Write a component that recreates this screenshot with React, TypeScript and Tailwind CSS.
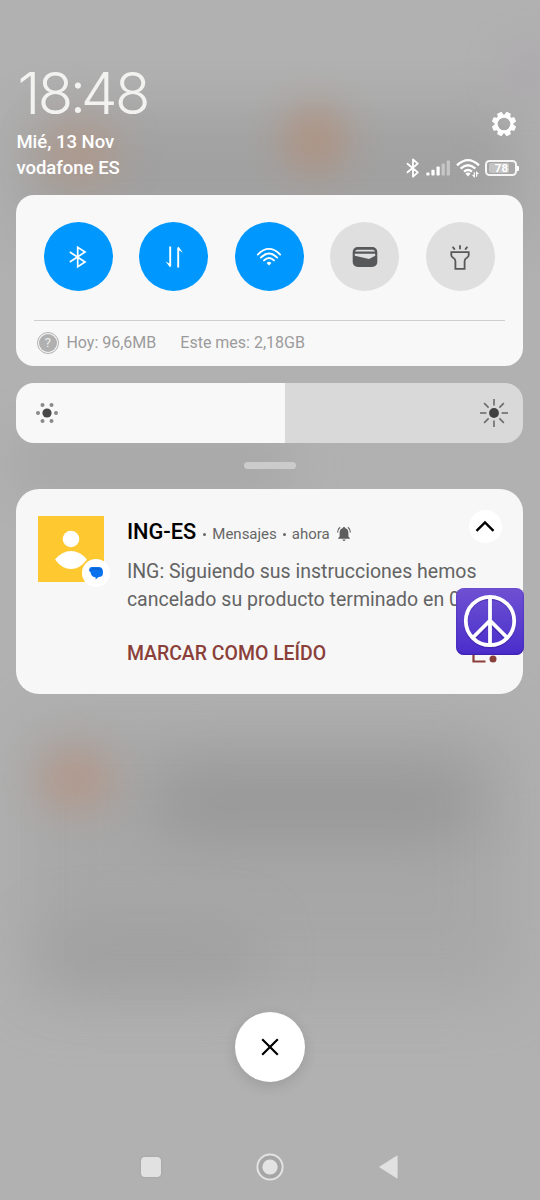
import type { ReactNode } from "react";

const digits = [
  { char: "1", className: "tracking-[-2.5px]" },
  { char: "8", className: "tracking-[-3.5px]" },
  { char: ":", className: "tracking-[-5px] -mt-[1.5px]" },
  { char: "4", className: "tracking-[-2.5px]" },
  { char: "8", className: "tracking-[-3px]" },
];

function Backdrop() {
  return (
    <div className="absolute inset-0 overflow-hidden bg-[#b1b1b1]">
      <div className="absolute left-[20px] top-[110px] w-[500px] h-[130px] bg-[#9a9a9a] opacity-70 blur-[30px]" />
      <div className="absolute left-[40px] top-[120px] w-[80px] h-[66px] rounded-full bg-[#b5937f] opacity-60 blur-[20px]" />
      <div className="absolute left-[282px] top-[106px] w-[66px] h-[68px] rounded-full bg-[#b38d76] opacity-70 blur-[19px]" />
      <div className="absolute left-[505px] top-[50px] w-[50px] h-[40px] rounded-full bg-[#a99ca8] opacity-50 blur-[20px]" />
      <div className="absolute left-[10px] top-[435px] w-[280px] h-[60px] bg-[#a2a2a2] opacity-60 blur-[24px]" />
      <div className="absolute left-[20px] top-[720px] w-[500px] h-[280px] bg-[#a5a5a5] opacity-80 blur-[34px]" />
      <div className="absolute left-[150px] top-[765px] w-[330px] h-[74px] rounded-full bg-[#929292] opacity-70 blur-[30px]" />
      <div className="absolute left-[40px] top-[925px] w-[220px] h-[60px] rounded-full bg-[#9a9a9a] opacity-60 blur-[28px]" />
      <div className="absolute left-[38px] top-[748px] w-[76px] h-[62px] rounded-full bg-[#b59382] opacity-75 blur-[20px]" />
    </div>
  );
}

function Clock() {
  return (
    <div className="flex h-[60px] pl-px font-[Inter,sans-serif] text-[58px] leading-[58px] font-light text-[#f2f2f0]">
      {digits.map((digit, index) => (
        <span key={index} className={digit.className}>
          {digit.char}
        </span>
      ))}
    </div>
  );
}

function GearIcon() {
  return (
    <svg width="26" height="26" viewBox="-13 -13 26 26" fill="#fff">
      {[0, 45, 90, 135, 180, 225, 270, 315].map((angle) => (
        <path key={angle} d="M-3.2 -8L-2.5 -11.6Q-2.3 -12.2 -1.7 -12.2H1.7Q2.3 -12.2 2.5 -11.6L3.2 -8Z" transform={`rotate(${angle + 22.5})`} />
      ))}
      <circle r="7.9" fill="none" stroke="#fff" strokeWidth="3.2" />
    </svg>
  );
}

function StatusIcons() {
  return (
    <div className="flex items-center h-[26px] text-white">
      <svg width="14" height="20" viewBox="0 0 14 20" fill="none" stroke="#fff" strokeWidth="1.8" strokeLinejoin="round" strokeLinecap="round">
        <path d="M1.5 5.7L11.8 14.4L7 18.7V1.3L11.8 5.6L1.5 14.3" />
      </svg>
      <svg className="ml-[6px]" width="25" height="18" viewBox="0 0 25 18" fill="#fff">
        <rect x="0.3" y="13.6" width="3.2" height="2.9" rx="0.8" />
        <rect x="5.4" y="10.8" width="3.2" height="5.7" rx="0.8" />
        <rect x="10.5" y="7.4" width="3.2" height="9.1" rx="0.8" />
        <rect x="15.6" y="4.4" width="3.2" height="12.1" rx="0.8" opacity="0.4" />
        <rect x="20.7" y="1.5" width="3.2" height="15" rx="0.8" opacity="0.4" />
      </svg>
      <svg className="ml-[5px]" width="25" height="20" viewBox="0 0 25 20" fill="none" stroke="#fff" strokeWidth="2.3">
        <path d="M1 7.3Q12 -3 23 7.3" />
        <path d="M4.6 10.6Q12 3.9 19.4 10.6" />
        <path d="M8 13.7Q12 10.3 16 13.7" />
        <path d="M9.4 15.6Q12 13.6 14.6 15.6L12 18.4Z" fill="#fff" stroke="none" />
        <path d="M18.3 14.2V18.6L16.6 17M20.6 18.8V14.4L22.4 16" strokeWidth="1.2" />
      </svg>
      <div className="ml-[4px] relative flex items-center justify-center w-[32px] h-[16px] rounded-[4.5px] border-2 border-white/90">
        <div className="absolute left-[1.5px] top-[1px] w-[20px] h-[10px] rounded-[2px] bg-white/35" />
        <span className="relative font-[Roboto,sans-serif] text-[11.5px] leading-[12px] font-bold">78</span>
      </div>
      <div className="w-[2px] h-[5px] rounded-r-[1px] bg-white" />
    </div>
  );
}

function Toggle({ active, children }: { active?: boolean; children: ReactNode }) {
  return (
    <button
      type="button"
      className={`flex items-center justify-center w-[69px] h-[69px] rounded-full ${active ? "bg-[#0098ff]" : "bg-[#dfdfdf]"}`}
    >
      {children}
    </button>
  );
}

function QuickSettings() {
  return (
    <section className="h-[171px] mt-[12.5px] px-[18px] rounded-[18px] bg-[#f8f8f8]">
      <div className="flex justify-between pt-[27.5px] pl-[9.5px] pr-[10.5px]">
        <Toggle active>
          <svg width="18" height="24" viewBox="0 0 18 24" fill="none" stroke="#fff" strokeWidth="1.7" strokeLinejoin="miter">
            <path d="M0.8 7L16 17L8.7 21.6V2.4L16 7L0.8 17" />
          </svg>
        </Toggle>
        <Toggle active>
          <svg width="18" height="24" viewBox="0 0 18 24" fill="none" stroke="#fff" strokeWidth="1.9">
            <path d="M5.2 1.5V21.4M13.2 22.4V2.5" />
            <path d="M0.6 16.4L5.2 19V22.6ZM17.8 7.4L13.2 5V1.2Z" fill="#fff" stroke="none" />
          </svg>
        </Toggle>
        <Toggle active>
          <svg width="26" height="20" viewBox="0 0 26 20" fill="none" stroke="#fff" strokeWidth="1.9" strokeLinecap="round">
            <path d="M1.8 7.6Q13 -3.8 24.2 7.6" />
            <path d="M4.8 10.6Q13 2.6 21.2 10.6" />
            <path d="M8 13.4Q13 8.8 18 13.4" />
            <path d="M10.6 16Q13 13.6 15.4 16L13 18.4Z" fill="#fff" stroke="none" />
          </svg>
        </Toggle>
        <Toggle>
          <svg width="26" height="22" viewBox="0 0 26 22">
            <rect x="0.7" y="1" width="24.6" height="20" rx="5" fill="#57585a" />
            <path d="M3 5.4Q3.6 3.8 5.4 3.8H20.6Q22.4 3.8 23 5.4Z" fill="#dfdfdf" />
            <path d="M2.8 7.8H23.2V9.8L18 12.6Q16.6 13.2 15 12.6L2.8 9.8Z" fill="#dfdfdf" />
          </svg>
        </Toggle>
        <Toggle>
          <svg width="20" height="26" viewBox="0 0 20 26" fill="none" stroke="#57585a" strokeWidth="1.8">
            <path d="M1.3 8.1H18.7V11Q18.7 12.6 17.2 13.5Q14.6 15 14.6 17V24.8H5.4V17Q5.4 15 2.8 13.5Q1.3 12.6 1.3 11Z" />
            <path d="M10 1.2V5.2M2.6 2.8L4.8 5.6M17.4 2.8L15.2 5.6" />
          </svg>
        </Toggle>
      </div>
      <div className="mt-[28.5px] h-px bg-[#cfcfcf]" />
      <div className="flex items-center mt-[8.5px] h-[28px] pl-[2.5px] text-[16px] text-[#9b9b9b]">
        <span className="flex items-center justify-center w-[22px] h-[22px] rounded-full border border-[#b0b0b0]">
          <span className="w-[18px] h-[18px] rounded-full bg-[#b0b0b0] text-[13px] leading-[18px] text-center text-[#ececec]">?</span>
        </span>
        <span className="ml-[7.5px]">Hoy: 96,6MB</span>
        <span className="ml-[24px]">Este mes: 2,18GB</span>
      </div>
    </section>
  );
}

function Brightness() {
  return (
    <section className="flex items-center justify-between mt-[17px] h-[60px] pl-[18.5px] pr-[14.5px] rounded-[18px] bg-[linear-gradient(90deg,#f8f8f8_269px,#d9d9d9_269px)]">
      <svg width="24" height="22" viewBox="-12 -11 24 22" fill="#8a8a8a">
        <circle r="4.6" fill="#484848" />
        <circle cx="-9" r="2" />
        <circle cx="9" r="2" />
        <circle cx="-4.5" cy="-8" r="2" />
        <circle cx="4.5" cy="-8" r="2" />
        <circle cx="-4.5" cy="8" r="2" />
        <circle cx="4.5" cy="8" r="2" />
      </svg>
      <svg width="30" height="30" viewBox="-15 -15 30 30" stroke="#6c6c6c" strokeWidth="1.6">
        <circle r="4.9" fill="#404040" stroke="none" />
        {[0, 45, 90, 135, 180, 225, 270, 315].map((angle) => (
          <path key={angle} d="M0 -7.6V-14" transform={`rotate(${angle})`} />
        ))}
      </svg>
    </section>
  );
}

function Notification() {
  return (
    <section className="relative flex mt-[19.5px] h-[205px] pl-[22px] rounded-[23px] bg-[#f7f7f7]">
      <div className="relative mt-[27px] w-[66px] h-[66px] shrink-0 bg-[#fdc830]">
        <svg width="66" height="66" viewBox="0 0 66 66" fill="#fff">
          <circle cx="33" cy="23" r="8.3" />
          <path d="M17 43.5Q24 35 33 35Q42 35 49 43.5Q42 53 33 53Q24 53 17 43.5Z" />
        </svg>
        <div className="absolute left-[44px] top-[43.5px] flex items-center justify-center w-[28px] h-[28px] rounded-full bg-white">
          <svg width="16" height="14" viewBox="0 0 16 14">
            <path d="M3.8 1H10.5Q15 1 15 6.4Q15 11 10.6 11L7.6 13.6V11.2Q3.4 11 2.6 6.4L1 4.4Q1.4 1 3.8 1Z" fill="#0b72ee" />
            <path d="M2.6 5Q3 2.9 5 2.9H10.2Q12.4 2.9 13 4.6" fill="none" stroke="#0a56c2" strokeWidth="0.9" />
          </svg>
        </div>
      </div>
      <div className="ml-[22.5px] pt-[30px] w-[370px]">
        <div className="flex items-center h-[28px] text-[15px] text-[#666]">
          <h2 className="text-[21.8px] font-medium text-black">ING-ES</h2>
          <span className="ml-[7px] mt-[4px] w-[3px] h-[3px] rounded-full bg-[#666]" />
          <span className="ml-[6px] mt-[4px]">Mensajes</span>
          <span className="ml-[6px] mt-[4px] w-[3px] h-[3px] rounded-full bg-[#666]" />
          <span className="ml-[6px] mt-[4px]">ahora</span>
          <svg className="ml-[7px] mt-[2px]" width="14" height="16" viewBox="0 0 14 16" fill="#5e5e5e">
            <path d="M7 1Q8.2 1 8.3 2.2Q11.4 3 11.4 6.8V10.4L12.8 12V12.8H1.2V12L2.6 10.4V6.8Q2.6 3 5.7 2.2Q5.8 1 7 1ZM5.4 13.6H8.6Q8.4 15 7 15Q5.6 15 5.4 13.6Z" />
            <path d="M0.6 6.4Q0.7 3 3.1 1.2M13.4 6.4Q13.3 3 10.9 1.2" fill="none" stroke="#5e5e5e" strokeWidth="1.1" />
          </svg>
        </div>
        <p className="mt-[11.5px] text-[19.5px] leading-[27.5px] text-[#646464] whitespace-nowrap">
          ING: Siguiendo sus instrucciones hemos
          <br />
          cancelado su producto terminado en 0
        </p>
        <button type="button" className="mt-[25.5px] block h-[30px] text-[19.45px] leading-[30px] font-medium text-[#8a4039]">
          MARCAR COMO LEÍDO
        </button>
      </div>
      <button type="button" className="absolute right-[21.5px] top-[21.5px] flex items-center justify-center w-[33px] h-[33px] rounded-full bg-white">
        <svg width="20" height="14" viewBox="0 0 20 14" fill="none" stroke="#000" strokeWidth="2.4">
          <path d="M1.5 10.8L10 2.4L18.5 10.8" />
        </svg>
      </button>
      <svg className="absolute left-[455px] top-[155px]" width="28" height="22" viewBox="0 0 28 22">
        <path d="M2.5 2V17.5H14.5" fill="none" stroke="#8a4039" strokeWidth="2.2" />
        <circle cx="22" cy="15" r="3.5" fill="#8a4039" />
      </svg>
      <PeaceBadge />
    </section>
  );
}

function PeaceBadge() {
  return (
    <div className="absolute left-[440px] top-[99px] flex items-center justify-center w-[67.5px] h-[67px] rounded-[8px] bg-linear-to-b from-[#6f50d2] to-[#4a2ccb] shadow-[inset_0_-1px_2px_#3d22a8]">
      <svg width="58" height="58" viewBox="-29 -29 58 58" fill="none" strokeWidth="4.2">
        <g stroke="#3c1f9c" strokeOpacity="0.55" transform="translate(0 1.2)">
          <circle r="24.2" />
          <path d="M0 -24V24M0 0L-17 17M0 0L17 17" />
        </g>
        <g stroke="#fff" strokeWidth="3.8">
          <circle r="24.2" />
          <path d="M0 -24V24M0 -0.5L-17 16.5M0 -0.5L17 16.5" />
        </g>
      </svg>
    </div>
  );
}

function NavBar() {
  return (
    <nav className="flex items-center justify-between mt-[70px] h-[30px] pl-[125px] pr-[125.5px]">
      <div className="w-[20px] h-[20px] rounded-[4px] bg-[#e1e1e1] shadow-[0_0_2px_#8888]" />
      <svg width="28" height="28" viewBox="-14 -14 28 28">
        <circle r="12.6" fill="none" stroke="#e3e3e3" strokeWidth="2" />
        <circle r="9.5" fill="none" stroke="#a6a6a6" strokeWidth="3.6" />
        <circle r="7.6" fill="#e3e3e3" />
      </svg>
      <svg width="19" height="24" viewBox="0 0 19 24" fill="#e1e1e1" stroke="#e1e1e1" strokeWidth="1.2" strokeLinejoin="round">
        <path d="M1 12L18 1.2V22.8Z" />
      </svg>
    </nav>
  );
}

export default function App() {
  return (
    <main className="relative w-[540px] h-[1200px] overflow-hidden font-[Roboto,sans-serif]">
      <Backdrop />
      <div className="relative flex flex-col pl-[16.4px] pr-[16.6px] pt-[64px]">
        <header className="flex justify-between h-[118px]">
          <div className="text-[18.5px] leading-[26px] font-medium text-white">
            <Clock />
            <p className="mt-[5px]">Mié, 13 Nov</p>
            <p>vodafone ES</p>
          </div>
          <div className="flex flex-col items-end pt-[47px]">
            <div className="mr-[6.5px]">
              <GearIcon />
            </div>
            <div className="mt-[18px] mr-[4px]">
              <StatusIcons />
            </div>
          </div>
        </header>
        <QuickSettings />
        <Brightness />
        <div className="mt-[19.5px] mx-auto w-[52px] h-[7px] rounded-full bg-[#cbcbcb]" />
        <Notification />
        <button
          type="button"
          className="mt-[318.5px] mx-auto flex items-center justify-center w-[70px] h-[70px] rounded-full bg-white shadow-[0_4px_14px_rgba(0,0,0,0.12)]"
        >
          <svg width="18" height="18" viewBox="0 0 18 18" stroke="#000" strokeWidth="2.2">
            <path d="M1.2 1.2L16.8 16.8M16.8 1.2L1.2 16.8" />
          </svg>
        </button>
        <NavBar />
      </div>
    </main>
  );
}
